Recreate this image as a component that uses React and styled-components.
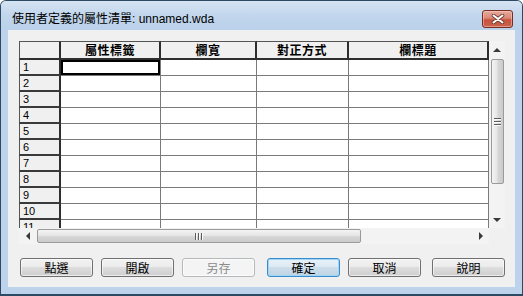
import React from 'react';
import styled, { createGlobalStyle } from 'styled-components';

const GlobalStyle = createGlobalStyle`
  html, body { margin: 0; padding: 0; background: #ffffff; }
  body {
    width: 523px;
    height: 296px;
    overflow: hidden;
    font-family: "Liberation Sans", "Noto Sans CJK TC", sans-serif;
  }
  * { box-sizing: border-box; }
`;

const CJK = `"Noto Sans CJK TC", "Liberation Sans", sans-serif`;

const Window = styled.div`
  width: 523px;
  height: 296px;
  border: 1px solid #2c4a63;
  border-bottom-width: 2px;
  border-radius: 6px 6px 0 0;
  background: #bcd3eb;
  display: flex;
  flex-direction: column;
  overflow: hidden;
`;

const TitleBar = styled.div`
  height: 29px;
  flex: none;
  display: flex;
  align-items: flex-start;
  justify-content: space-between;
  padding: 0 9px 0 11px;
  background: linear-gradient(#d6e4f3, #c3d7ed 45%, #b9d1ea);
`;

const Title = styled.div`
  margin-top: 11px;
  font-size: 12px;
  line-height: 14px;
  color: #000;
  font-family: "Liberation Sans", "Noto Sans CJK TC", sans-serif;
  white-space: nowrap;
`;

const CloseButton = styled.div`
  margin-top: 9px;
  width: 31px;
  height: 18px;
  border: 1px solid #7a2c20;
  border-radius: 3px;
  background: linear-gradient(#e6aa9e, #d98875 45%, #c8523d 55%, #c9634e);
  box-shadow: inset 0 0 0 1px rgba(255, 220, 210, 0.45);
  display: flex;
  align-items: center;
  justify-content: center;
`;

const Frame = styled.div`
  flex: 1;
  display: flex;
  padding: 0 7px 7px;
`;

const Client = styled.div`
  flex: 1;
  background: #f0f0f0;
  display: flex;
  flex-direction: column;
  padding: 11px 10px 0 11px;
`;

const Grid = styled.div`
  width: 486px;
  height: 203px;
  display: grid;
  grid-template-columns: 470px 16px;
  grid-template-rows: 187px 16px;
  background: #f0f0f0;
`;

const Sheet = styled.div`
  overflow: hidden;
  display: grid;
  grid-template-columns: 42px 100px 96px 92px 140px;
  grid-template-rows: 19px;
  grid-auto-rows: 16px;
  align-content: start;
  background: #ffffff;
`;

const CornerCell = styled.div`
  background: #f0f0f0;
  border-top: 1px solid #555;
  border-left: 1px solid #555;
  border-right: 2px solid #2e2e2e;
  border-bottom: 2px solid #2e2e2e;
`;

const ColumnHead = styled.div`
  background: #f0f0f0;
  border-top: 1px solid #555;
  border-right: 2px solid #2e2e2e;
  border-bottom: 2px solid #2e2e2e;
  font-family: ${CJK};
  font-weight: bold;
  font-size: 12px;
  letter-spacing: 0.5px;
  line-height: 16px;
  text-align: center;
  color: #000;
`;

const RowHead = styled.div`
  background: #f0f0f0;
  border-left: 1px solid #555;
  border-right: 2px solid #2e2e2e;
  border-bottom: 2px solid #3a3a3a;
  padding-left: 3px;
  font-family: "Liberation Sans", sans-serif;
  font-size: 11px;
  line-height: 14px;
  color: #000;
`;

const DataCell = styled.div`
  background: #ffffff;
  border-right: 1px solid #7a7a7a;
  border-bottom: 1px solid #7a7a7a;
  box-shadow: ${p => (p.$selected ? 'inset 0 0 0 2px #000' : 'none')};
`;

const VScroll = styled.div`
  background: #f3f3f3;
  display: flex;
  flex-direction: column;
  align-items: center;
`;

const HScroll = styled.div`
  background: #f3f3f3;
  display: flex;
  align-items: center;
`;

const Corner = styled.div`
  background: #f0f0f0;
`;

const ArrowBox = styled.div`
  flex: none;
  width: ${p => (p.$horizontal ? '17px' : '16px')};
  height: ${p => (p.$horizontal ? '16px' : '17px')};
  display: flex;
  align-items: center;
  justify-content: center;
`;

const Arrow = styled.div`
  width: 0;
  height: 0;
  ${p => p.$dir === 'up' && 'border-left: 4px solid transparent; border-right: 4px solid transparent; border-bottom: 4px solid #3a3a3a;'}
  ${p => p.$dir === 'down' && 'border-left: 4px solid transparent; border-right: 4px solid transparent; border-top: 4px solid #3a3a3a;'}
  ${p => p.$dir === 'left' && 'border-top: 4px solid transparent; border-bottom: 4px solid transparent; border-right: 4px solid #3a3a3a;'}
  ${p => p.$dir === 'right' && 'border-top: 4px solid transparent; border-bottom: 4px solid transparent; border-left: 4px solid #3a3a3a;'}
`;

const VThumb = styled.div`
  width: 13px;
  height: 125px;
  margin-top: 1px;
  border: 1px solid #9a9a9a;
  border-radius: 2px;
  background: linear-gradient(90deg, #f4f4f4, #e6e6e6 45%, #d6d6d6 55%, #cbcbcb);
  display: flex;
  flex-direction: column;
  align-items: center;
  justify-content: center;
  gap: 1px;
`;

const HThumb = styled.div`
  width: 324px;
  height: 14px;
  margin-left: 1px;
  border: 1px solid #9a9a9a;
  border-radius: 2px;
  background: linear-gradient(#f4f4f4, #e6e6e6 45%, #d6d6d6 55%, #cbcbcb);
  display: flex;
  align-items: center;
  justify-content: center;
  gap: 1px;
`;

const Grip = styled.div`
  width: ${p => (p.$vertical ? '1px' : '7px')};
  height: ${p => (p.$vertical ? '7px' : '1px')};
  background: #5c5c5c;
  box-shadow: ${p => (p.$vertical ? '1px 0 0 #fafafa' : '0 1px 0 #fafafa')};
  margin: ${p => (p.$vertical ? '0 1px 0 0' : '0 0 1px 0')};
`;

const Spacer = styled.div`
  flex: 1;
`;

const ButtonRow = styled.div`
  display: flex;
  margin-top: 14px;
  padding-left: 1px;
`;

const Button = styled.div`
  width: 73px;
  height: 19px;
  margin-left: ${p => p.$lead || 0}px;
  border: 1px solid ${p => (p.$default ? '#3a8ccd' : p.$disabled ? '#b5b9bc' : '#707070')};
  border-radius: 3px;
  background: ${p =>
    p.$disabled
      ? '#f4f4f4'
      : p.$default
      ? 'linear-gradient(#e8f1f8, #dce9f3 50%, #cddeeb 50%, #bfd3e3)'
      : 'linear-gradient(#f2f2f2, #ebebeb 50%, #dddddd 50%, #cfcfcf)'};
  box-shadow: ${p => (p.$default ? 'inset 0 0 0 1px #9fd6f5' : 'inset 0 0 0 1px rgba(255,255,255,0.6)')};
  font-family: ${CJK};
  font-size: 12px;
  line-height: 17px;
  text-align: center;
  color: ${p => (p.$disabled ? '#8a8a8a' : '#000')};
`;

const columns = ['屬性標籤', '欄寬', '對正方式', '欄標題'];
const rows = Array.from({ length: 11 }, (_, i) => i + 1);

const buttons = [
  { label: '點選', lead: 0 },
  { label: '開啟', lead: 8 },
  { label: '另存', lead: 8, disabled: true },
  { label: '確定', lead: 12, isDefault: true },
  { label: '取消', lead: 8 },
  { label: '說明', lead: 11 },
];

const CloseGlyph = () => (
  <svg width="14" height="10" viewBox="0 0 14 10">
    <path d="M2.5 1.5 L11.5 8.5 M11.5 1.5 L2.5 8.5" stroke="#6b3a33" strokeWidth="3.6" strokeLinecap="round" />
    <path d="M2.5 1.5 L11.5 8.5 M11.5 1.5 L2.5 8.5" stroke="#ffffff" strokeWidth="2" strokeLinecap="round" />
  </svg>
);

export default function App() {
  return (
    <>
      <GlobalStyle />
      <Window>
        <TitleBar>
          <Title>使用者定義的屬性清單: unnamed.wda</Title>
          <CloseButton>
            <CloseGlyph />
          </CloseButton>
        </TitleBar>
        <Frame>
          <Client>
            <Grid>
              <Sheet>
                <CornerCell />
                {columns.map(c => (
                  <ColumnHead key={c}>{c}</ColumnHead>
                ))}
                {rows.map(r => (
                  <React.Fragment key={r}>
                    <RowHead>{r}</RowHead>
                    {columns.map((c, ci) => (
                      <DataCell key={c} $selected={r === 1 && ci === 0} />
                    ))}
                  </React.Fragment>
                ))}
              </Sheet>
              <VScroll>
                <ArrowBox>
                  <Arrow $dir="up" />
                </ArrowBox>
                <VThumb>
                  <Grip />
                  <Grip />
                  <Grip />
                </VThumb>
                <Spacer />
                <ArrowBox>
                  <Arrow $dir="down" />
                </ArrowBox>
              </VScroll>
              <HScroll>
                <ArrowBox $horizontal>
                  <Arrow $dir="left" />
                </ArrowBox>
                <HThumb>
                  <Grip $vertical />
                  <Grip $vertical />
                  <Grip $vertical />
                </HThumb>
                <Spacer />
                <ArrowBox $horizontal>
                  <Arrow $dir="right" />
                </ArrowBox>
              </HScroll>
              <Corner />
            </Grid>
            <ButtonRow>
              {buttons.map(b => (
                <Button key={b.label} $lead={b.lead} $disabled={b.disabled} $default={b.isDefault}>
                  {b.label}
                </Button>
              ))}
            </ButtonRow>
          </Client>
        </Frame>
      </Window>
    </>
  );
}
